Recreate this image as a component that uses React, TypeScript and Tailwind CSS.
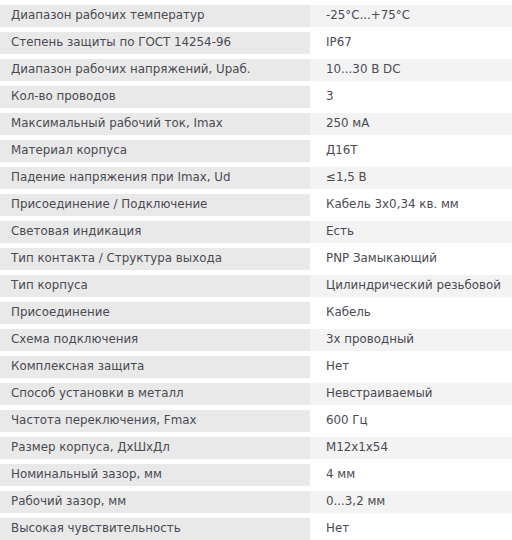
const rows: [string, string][] = [
  ["Диапазон рабочих температур", "-25°C...+75°C"],
  ["Степень защиты по ГОСТ 14254-96", "IP67"],
  ["Диапазон рабочих напряжений, Uраб.", "10...30 В DC"],
  ["Кол-во проводов", "3"],
  ["Максимальный рабочий ток, Imax", "250 мА"],
  ["Материал корпуса", "Д16Т"],
  ["Падение напряжения при Imax, Ud", "≤1,5 В"],
  ["Присоединение / Подключение", "Кабель 3х0,34 кв. мм"],
  ["Световая индикация", "Есть"],
  ["Тип контакта / Структура выхода", "PNP Замыкающий"],
  ["Тип корпуса", "Цилиндрический резьбовой"],
  ["Присоединение", "Кабель"],
  ["Схема подключения", "3х проводный"],
  ["Комплексная защита", "Нет"],
  ["Способ установки в металл", "Невстраиваемый"],
  ["Частота переключения, Fmax", "600 Гц"],
  ["Размер корпуса, ДхШхДл", "М12х1х54"],
  ["Номинальный зазор, мм", "4 мм"],
  ["Рабочий зазор, мм", "0...3,2 мм"],
  ["Высокая чувствительность", "Нет"],
]

export default function App() {
  return (
    <div className="w-[512px] h-[540px] overflow-hidden bg-white pt-[5px] font-['DejaVu_Sans',sans-serif] text-[11.85px] text-[#4a4a52]">
      <div className="flex flex-col gap-[5px]">
        {rows.map(([name, value], i) => (
          <div key={i} className="flex h-[22px]">
            <div className="w-[310px] bg-[#e9e9e9] pl-[11px] pb-[1px] flex items-center whitespace-nowrap">
              {name}
            </div>
            <div
              className={
                "flex-1 pl-[16px] pb-[1px] flex items-center whitespace-nowrap " +
                (i % 2 === 0 ? "bg-[#f3f3f3]" : "bg-white")
              }
            >
              {value}
            </div>
          </div>
        ))}
      </div>
    </div>
  )
}
